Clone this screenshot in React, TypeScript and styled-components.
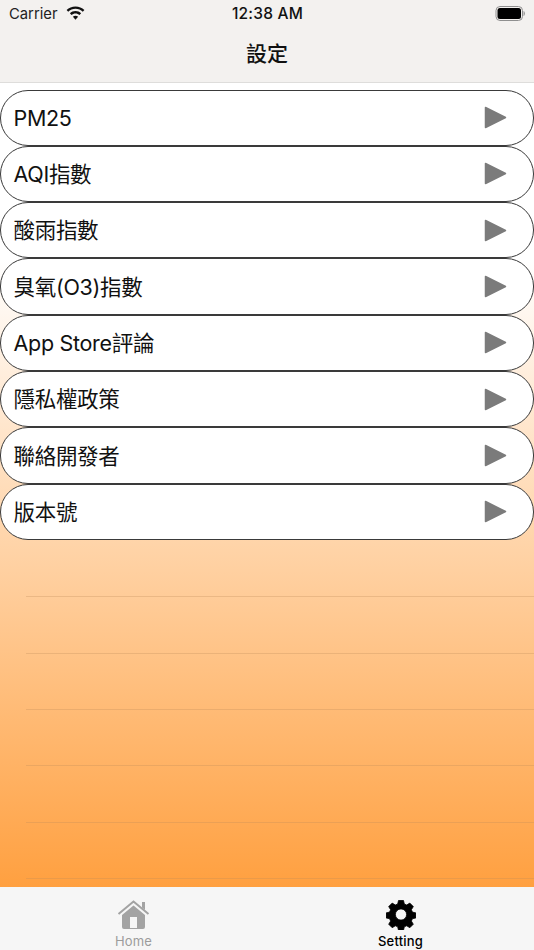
import React from "react";
import styled, { createGlobalStyle } from "styled-components";

const Global = createGlobalStyle`
  html, body { margin: 0; padding: 0; background: #fff; }
  body { font-family: "Inter", "Liberation Sans", "Noto Sans CJK TC", sans-serif; }
`;

const Screen = styled.div`
  width: 534px;
  height: 950px;
  display: flex;
  flex-direction: column;
  overflow: hidden;
`;

const Header = styled.header`
  height: 83px;
  box-sizing: border-box;
  background: #f3f1ef;
  border-bottom: 1px solid #dedddb;
  display: flex;
  flex-direction: column;
`;

const StatusBar = styled.div`
  height: 27px;
  display: grid;
  grid-template-columns: 1fr auto 1fr;
  align-items: center;
  padding: 0 8px 0 9px;
  font-size: 15.5px;
  color: #111;
`;

const Carrier = styled.div`
  display: flex;
  align-items: center;
  gap: 8px;
  color: #222;
  font-size: 14.8px;
`;

const Clock = styled.div`
  font-weight: 500;
  letter-spacing: 0.2px;
`;

const BatteryWrap = styled.div`
  justify-self: end;
  display: flex;
`;

const Title = styled.h1`
  flex: 1;
  margin: 0;
  display: flex;
  align-items: center;
  justify-content: center;
  padding-bottom: 5px;
  font-family: "Noto Sans CJK TC", sans-serif;
  font-size: 21px;
  font-weight: 500;
  color: #111;
`;

const Content = styled.main`
  flex: 1;
  min-height: 0;
  background: linear-gradient(180deg, #ffffff 0%, #ffffff 22%, #ffa040 100%);
  padding-top: 6.5px;
  box-sizing: border-box;
`;

const Row = styled.div`
  height: 56.33px;
  box-sizing: border-box;
  background: #fff;
  border: 1px solid #3a3a3a;
  border-radius: 28px;
  display: flex;
  align-items: center;
  justify-content: space-between;
  padding: 0 26px 0 12.5px;
`;

const RowLabel = styled.span`
  font-family: "Inter", "Noto Sans CJK TC", sans-serif;
  font-size: 21.5px;
  line-height: 28px;
  letter-spacing: -0.3px;
  color: #111;
`;

const Filler = styled.div`
  padding-top: 1px;
`;

const EmptyRow = styled.div`
  height: 56.33px;
  box-sizing: border-box;
  margin-left: 26px;
  border-bottom: 1px solid rgba(190, 140, 90, 0.3);
`;

const TabBar = styled.nav`
  height: 63px;
  box-sizing: border-box;
  background: #f6f6f6;
  display: grid;
  grid-template-columns: 1fr 1fr;
`;

const Tab = styled.div<{ $active?: boolean }>`
  display: flex;
  flex-direction: column;
  align-items: center;
  padding-top: 12px;
  gap: 3px;
  font-size: 13px;
  line-height: 16px;
  font-weight: ${(p) => (p.$active ? 500 : 400)};
  letter-spacing: 0.2px;
  color: ${(p) => (p.$active ? "#000" : "#9c9c9c")};
`;

const items = ["PM25", "AQI指數", "酸雨指數", "臭氧(O3)指數", "App Store評論", "隱私權政策", "聯絡開發者", "版本號"];

const Arrow = () => (
  <svg width="23" height="23" viewBox="0 0 23 23">
    <path d="M1.500 1.500 L21.500 11.500 L1.500 21.500 Z" fill="#7b7b7b" stroke="#7b7b7b" strokeWidth="1.500" strokeLinejoin="round" />
  </svg>
);

const Wifi = () => (
  <svg width="19" height="15" viewBox="0 0 19 14">
    <path d="M9.500 0C6 0 2.900 1.400.6 3.600l1.600 1.700C4.100 3.500 6.700 2.300 9.500 2.300s5.400 1.200 7.300 3l1.600-1.700C16.100 1.400 13 0 9.500 0z" fill="#111" />
    <path d="M9.500 4.600c-2.200 0-4.100.9-5.600 2.200l1.600 1.700c1-1 2.500-1.600 4-1.600s3 .6 4 1.600l1.600-1.700C13.600 5.500 11.700 4.600 9.500 4.600z" fill="#111" />
    <path d="M9.500 9.200c-1 0-1.900.4-2.600 1l2.600 3 2.600-3c-.7-.6-1.600-1-2.600-1z" fill="#111" />
  </svg>
);

const Battery = () => (
  <svg width="31" height="15" viewBox="0 0 30 15">
    <rect x="0.500" y="0.500" width="26.500" height="14" rx="4" fill="none" stroke="#8f8f8f" />
    <rect x="2" y="2" width="23.500" height="11" rx="2.500" fill="#000" />
    <path d="M28 5v5c.9-.3 1.500-1.400 1.500-2.500S28.900 5.300 28 5z" fill="#9a9a9a" />
  </svg>
);

const HomeIcon = () => (
  <svg width="33" height="31" viewBox="0 0 33 31">
    <path d="M1.500 15 L16.500 2.500 L31.500 15" fill="none" stroke="#a3a3a3" strokeWidth="2" />
    <path d="M25 3h3v8l-3-2.500z" fill="#a3a3a3" />
    <path fillRule="evenodd" d="M16.500 6.500 L28 16 V28 a2 2 0 0 1-2 2 H7 a2 2 0 0 1-2-2 V16 Z M13 18 V29 H20 V18 Z" fill="#a3a3a3" />
  </svg>
);

const GearIcon = () => (
  <svg width="30" height="31" viewBox="0 0 30 30">
    <path
      fillRule="evenodd"
      fill="#000"
      stroke="#000"
      strokeWidth="0.8"
      strokeLinejoin="round"
      d="M12.500 1h5l.8 3.500 2.400 1 3.100-1.900 3.500 3.500-1.900 3.100 1 2.400 3.500.8v5l-3.500.8-1 2.400 1.900 3.100-3.500 3.500-3.100-1.900-2.400 1-.8 3.500h-5l-.8-3.500-2.400-1-3.100 1.900-3.500-3.500 1.900-3.100-1-2.400-3.500-.8v-5l3.500-.8 1-2.400-1.900-3.100 3.500-3.500 3.100 1.900 2.400-1zM15 9.400a5.600 5.600 0 1 0 0 11.200 5.600 5.600 0 0 0 0-11.200z"
    />
  </svg>
);

export default function App() {
  return (
    <Screen>
      <Global />
      <Header>
        <StatusBar>
          <Carrier>
            Carrier
            <Wifi />
          </Carrier>
          <Clock>12:38 AM</Clock>
          <BatteryWrap>
            <Battery />
          </BatteryWrap>
        </StatusBar>
        <Title>設定</Title>
      </Header>
      <Content>
        {items.map((t) => (
          <Row key={t}>
            <RowLabel>{t}</RowLabel>
            <Arrow />
          </Row>
        ))}
        <Filler>
          {Array.from({ length: 6 }, (_, i) => (
            <EmptyRow key={i} />
          ))}
        </Filler>
      </Content>
      <TabBar>
        <Tab>
          <HomeIcon />
          Home
        </Tab>
        <Tab $active>
          <GearIcon />
          Setting
        </Tab>
      </TabBar>
    </Screen>
  );
}
